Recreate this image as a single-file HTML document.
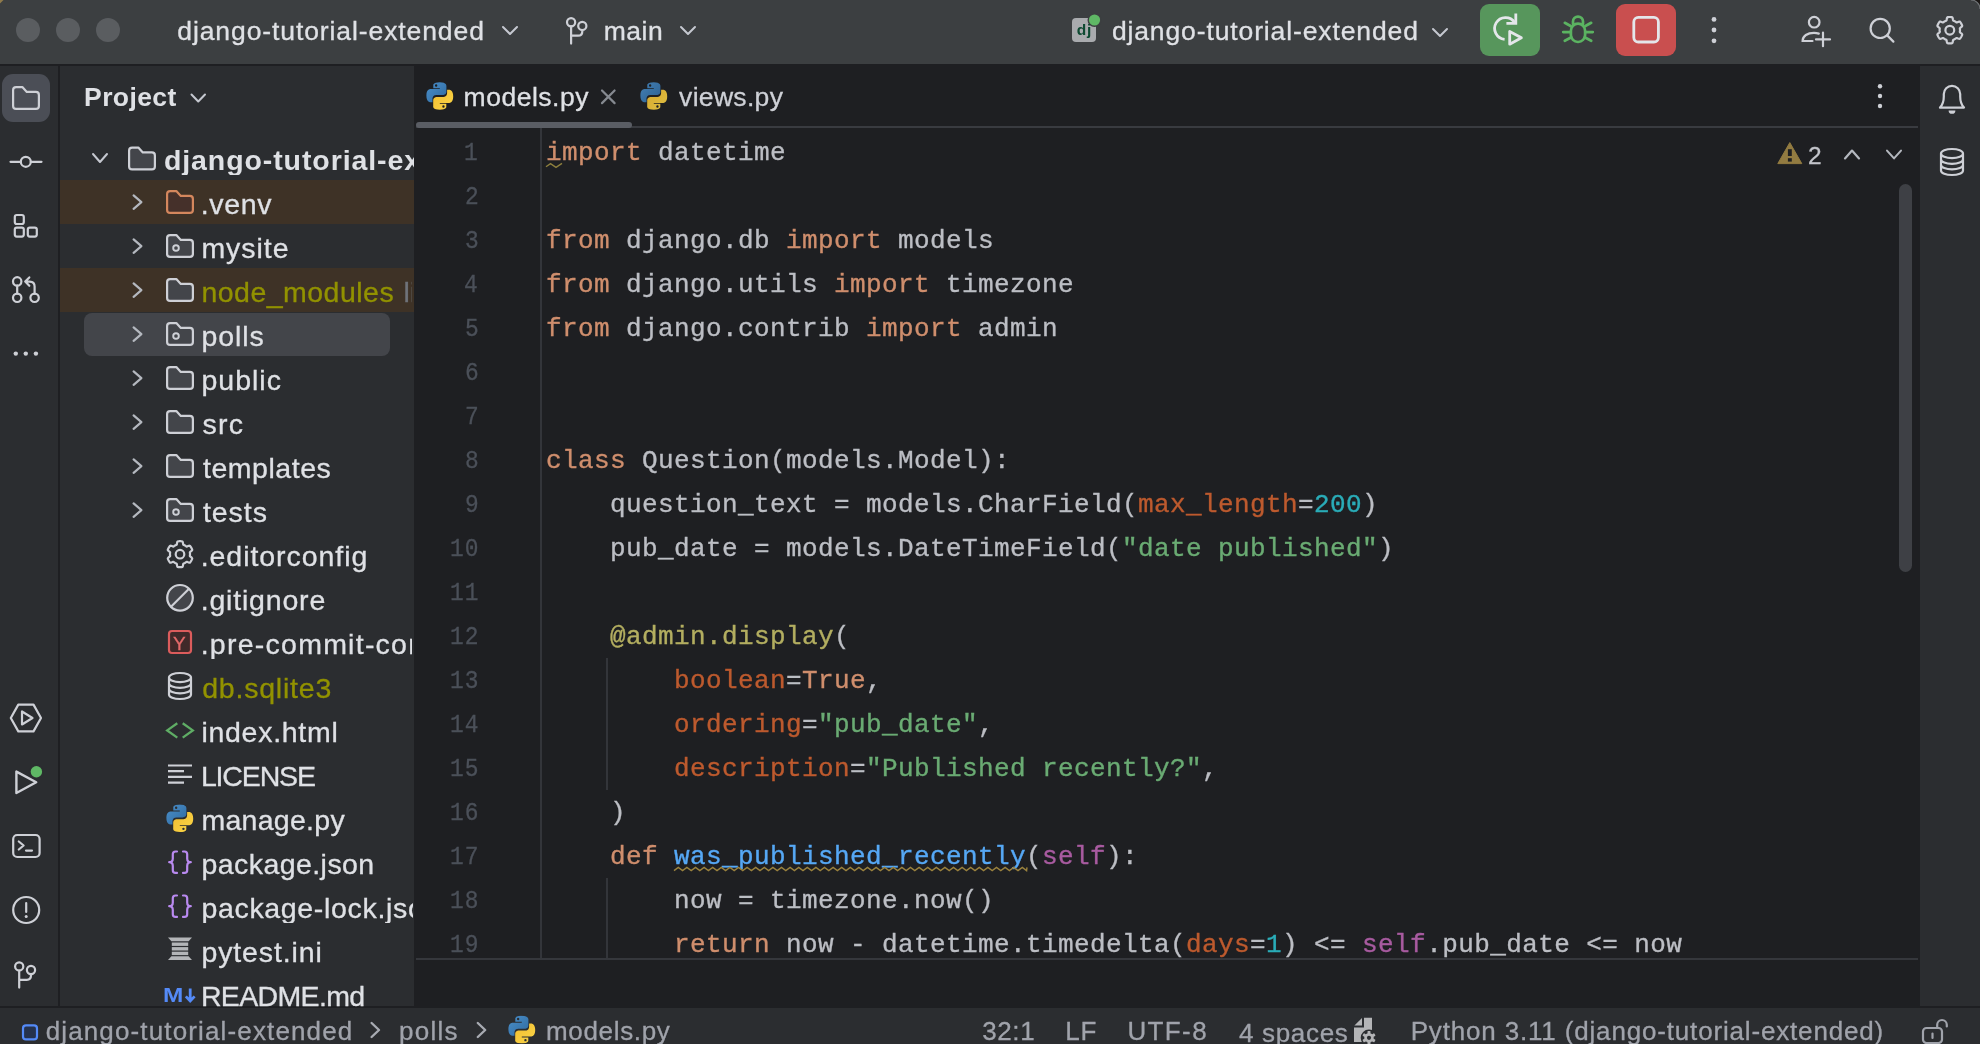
<!DOCTYPE html>
<html lang="en"><head><meta charset="utf-8"><title>models.py - django-tutorial-extended</title>
<style>html,body{margin:0;padding:0}body{width:1980px;height:1044px;background:#1e1f22;overflow:hidden;position:relative;font-family:"Liberation Sans",sans-serif}
.b{position:absolute}.t{position:absolute;line-height:1;white-space:pre;display:block;-webkit-text-stroke:.3px}.bd{-webkit-text-stroke:0}
.m{font-family:"Liberation Mono",monospace}.c{font-size:26.0px;letter-spacing:0.3977px;color:#bcbec4;-webkit-text-stroke:.35px}
.k{color:#cf8e6d}.s{color:#6aab73}.n{color:#2aacb8}.a{color:#bd5a2e}.d{color:#b3ae60}.f{color:#56a8f5}.p{color:#a85ba0}
svg.o{position:absolute;left:0;top:0}#L,#L2{position:absolute;left:0;top:0;width:1980px;height:1044px;will-change:transform}</style></head>
<body>
<div id="L">
<div class="b" style="left:0;top:0;width:1980px;height:64px;background:#3c3f41"></div>
<div class="b" style="left:0;top:66px;width:58px;height:940px;background:#2b2d30"></div>
<div class="b" style="left:60px;top:66px;width:354px;height:940px;background:#2b2d30"></div>
<div class="b" style="left:1920px;top:66px;width:60px;height:940px;background:#2b2d30"></div>
<div class="b" style="left:0;top:1008px;width:1980px;height:36px;background:#2b2d30"></div>
<div class="b" style="left:416px;top:126px;width:1502px;height:2px;background:#393b40"></div>
<div class="b" style="left:416px;top:122px;width:216px;height:6px;border-radius:3px;background:#5a5d64"></div>
<div class="b" style="left:540.4px;top:128px;width:1.6px;height:830px;background:#33353a"></div>
<div class="b" style="left:416px;top:958.2px;width:1502px;height:1.6px;background:#35373c"></div>
<div class="b" style="left:606.3px;top:658px;width:1.5px;height:132px;background:#33353a"></div>
<div class="b" style="left:606.3px;top:878px;width:1.5px;height:80px;background:#33353a"></div>
<div class="b" style="left:1898.5px;top:183.5px;width:13px;height:388px;border-radius:6.5px;background:#3e4045"></div>
<div class="b" style="left:60px;top:180px;width:354px;height:44px;background:#3e3226"></div>
<div class="b" style="left:60px;top:268px;width:354px;height:44px;background:#3e3226"></div>
<div class="b" style="left:84px;top:312.5px;width:306px;height:43.5px;border-radius:8px;background:#43454a"></div>
<div class="b" style="left:2px;top:74px;width:48px;height:48px;border-radius:11px;background:#4b4e56"></div>
<div class="b" style="left:1480px;top:4px;width:60px;height:52px;border-radius:9px;background:#57965c"></div>
<div class="b" style="left:1616px;top:4px;width:60px;height:52px;border-radius:9px;background:#c94f4f"></div>
<span class="t" style="left:177.28px;top:18px;font-size:26.5px;color:#dfe1e5;letter-spacing:0.904px;">django-tutorial-extended</span>
<span class="t" style="left:603.65px;top:18px;font-size:26.5px;color:#dfe1e5;letter-spacing:0.533px;">main</span>
<span class="t" style="left:1111.88px;top:18px;font-size:26.5px;color:#dfe1e5;letter-spacing:0.878px;">django-tutorial-extended</span>
<span class="t" style="left:84.05px;top:84px;font-size:26.5px;color:#dfe1e5;letter-spacing:0.408px;font-weight:700;-webkit-text-stroke:0;">Project</span>
<span class="t" style="left:163.88px;top:146px;font-size:28.5px;color:#dfe1e5;letter-spacing:0.916px;font-weight:700;-webkit-text-stroke:0;width:250.6px;overflow:hidden;">django-tutorial-extended</span>
<span class="t" style="left:200.68px;top:190px;font-size:28.5px;color:#dfe1e5;letter-spacing:0.706px;">.venv</span>
<span class="t" style="left:201.43px;top:234px;font-size:28.5px;color:#dfe1e5;letter-spacing:0.950px;">mysite</span>
<span class="t" style="left:201.43px;top:278px;font-size:28.5px;color:#929200;letter-spacing:0.480px;">node_modules</span>
<span class="t" style="left:403.62px;top:278px;font-size:28.5px;color:#6f737a;width:8.5px;overflow:hidden;">library root</span>
<span class="t" style="left:201.43px;top:322px;font-size:28.5px;color:#dfe1e5;letter-spacing:0.912px;">polls</span>
<span class="t" style="left:201.43px;top:366px;font-size:28.5px;color:#dfe1e5;letter-spacing:1.005px;">public</span>
<span class="t" style="left:202.43px;top:410px;font-size:28.5px;color:#dfe1e5;letter-spacing:1.262px;">src</span>
<span class="t" style="left:202.93px;top:454px;font-size:28.5px;color:#dfe1e5;letter-spacing:0.547px;">templates</span>
<span class="t" style="left:202.93px;top:498px;font-size:28.5px;color:#dfe1e5;letter-spacing:0.962px;">tests</span>
<span class="t" style="left:200.68px;top:542px;font-size:28.5px;color:#dfe1e5;letter-spacing:0.954px;">.editorconfig</span>
<span class="t" style="left:200.68px;top:586px;font-size:28.5px;color:#dfe1e5;letter-spacing:0.814px;">.gitignore</span>
<span class="t" style="left:200.68px;top:630px;font-size:28.5px;color:#dfe1e5;letter-spacing:1.252px;width:211.5px;overflow:hidden;">.pre-commit-config.yaml</span>
<span class="t" style="left:202.18px;top:674px;font-size:28.5px;color:#929200;letter-spacing:0.786px;">db.sqlite3</span>
<span class="t" style="left:201.43px;top:718px;font-size:28.5px;color:#dfe1e5;letter-spacing:0.719px;">index.html</span>
<span class="t" style="left:200.93px;top:762px;font-size:28.5px;color:#dfe1e5;letter-spacing:-1.163px;">LICENSE</span>
<span class="t" style="left:201.43px;top:806px;font-size:28.5px;color:#dfe1e5;letter-spacing:0.275px;">manage.py</span>
<span class="t" style="left:201.43px;top:850px;font-size:28.5px;color:#dfe1e5;letter-spacing:0.441px;">package.json</span>
<span class="t" style="left:201.43px;top:894px;font-size:28.5px;color:#dfe1e5;letter-spacing:0.671px;width:211.5px;overflow:hidden;">package-lock.json</span>
<span class="t" style="left:201.43px;top:938px;font-size:28.5px;color:#dfe1e5;letter-spacing:0.875px;">pytest.ini</span>
<span class="t" style="left:163.22px;top:985px;font-size:20px;color:#548af7;font-weight:700;-webkit-text-stroke:0;transform:scaleX(1.22);transform-origin:0 0;">M</span>
<span class="t" style="left:200.93px;top:982px;font-size:28.5px;color:#dfe1e5;letter-spacing:-0.644px;">README.md</span>
<span class="t" style="left:463.55px;top:84px;font-size:26.5px;color:#dfe1e5;letter-spacing:0.512px;">models.py</span>
<span class="t" style="left:679.08px;top:84px;font-size:26.5px;color:#ced0d6;letter-spacing:0.314px;">views.py</span>
<span class="t" style="left:1807.95px;top:144px;font-size:24.5px;color:#c3c5cb;">2</span>
<span class="t m" style="right:1500.86px;top:140px;font-size:26px;letter-spacing:1.2px;color:#4b5059;transform:scaleX(0.88);transform-origin:100% 50%">1</span>
<span class="t m c" style="left:546px;top:140px"><span class="k">import</span> datetime</span>
<span class="t m" style="right:1500.31px;top:184px;font-size:26px;letter-spacing:1.2px;color:#4b5059;transform:scaleX(0.88);transform-origin:100% 50%">2</span>
<span class="t m" style="right:1500.53px;top:228px;font-size:26px;letter-spacing:1.2px;color:#4b5059;transform:scaleX(0.88);transform-origin:100% 50%">3</span>
<span class="t m c" style="left:546px;top:228px"><span class="k">from</span> django.db <span class="k">import</span> models</span>
<span class="t m" style="right:1500.75px;top:272px;font-size:26px;letter-spacing:1.2px;color:#4b5059;transform:scaleX(0.88);transform-origin:100% 50%">4</span>
<span class="t m c" style="left:546px;top:272px"><span class="k">from</span> django.utils <span class="k">import</span> timezone</span>
<span class="t m" style="right:1500.53px;top:316px;font-size:26px;letter-spacing:1.2px;color:#4b5059;transform:scaleX(0.88);transform-origin:100% 50%">5</span>
<span class="t m c" style="left:546px;top:316px"><span class="k">from</span> django.contrib <span class="k">import</span> admin</span>
<span class="t m" style="right:1500.42px;top:360px;font-size:26px;letter-spacing:1.2px;color:#4b5059;transform:scaleX(0.88);transform-origin:100% 50%">6</span>
<span class="t m" style="right:1500.20px;top:404px;font-size:26px;letter-spacing:1.2px;color:#4b5059;transform:scaleX(0.88);transform-origin:100% 50%">7</span>
<span class="t m" style="right:1500.42px;top:448px;font-size:26px;letter-spacing:1.2px;color:#4b5059;transform:scaleX(0.88);transform-origin:100% 50%">8</span>
<span class="t m c" style="left:546px;top:448px"><span class="k">class</span> Question(models.Model):</span>
<span class="t m" style="right:1500.42px;top:492px;font-size:26px;letter-spacing:1.2px;color:#4b5059;transform:scaleX(0.88);transform-origin:100% 50%">9</span>
<span class="t m c" style="left:546px;top:492px">    question_text = models.CharField(<span class="a">max_length</span>=<span class="n">200</span>)</span>
<span class="t m" style="right:1500.53px;top:536px;font-size:26px;letter-spacing:1.2px;color:#4b5059;transform:scaleX(0.88);transform-origin:100% 50%">10</span>
<span class="t m c" style="left:546px;top:536px">    pub_date = models.DateTimeField(<span class="s">"date published"</span>)</span>
<span class="t m" style="right:1500.86px;top:580px;font-size:26px;letter-spacing:1.2px;color:#4b5059;transform:scaleX(0.88);transform-origin:100% 50%">11</span>
<span class="t m" style="right:1500.31px;top:624px;font-size:26px;letter-spacing:1.2px;color:#4b5059;transform:scaleX(0.88);transform-origin:100% 50%">12</span>
<span class="t m c" style="left:546px;top:624px">    <span class="d">@admin.display</span>(</span>
<span class="t m" style="right:1500.53px;top:668px;font-size:26px;letter-spacing:1.2px;color:#4b5059;transform:scaleX(0.88);transform-origin:100% 50%">13</span>
<span class="t m c" style="left:546px;top:668px">        <span class="a">boolean</span>=<span class="k">True</span>,</span>
<span class="t m" style="right:1500.75px;top:712px;font-size:26px;letter-spacing:1.2px;color:#4b5059;transform:scaleX(0.88);transform-origin:100% 50%">14</span>
<span class="t m c" style="left:546px;top:712px">        <span class="a">ordering</span>=<span class="s">"pub_date"</span>,</span>
<span class="t m" style="right:1500.53px;top:756px;font-size:26px;letter-spacing:1.2px;color:#4b5059;transform:scaleX(0.88);transform-origin:100% 50%">15</span>
<span class="t m c" style="left:546px;top:756px">        <span class="a">description</span>=<span class="s">"Published recently?"</span>,</span>
<span class="t m" style="right:1500.42px;top:800px;font-size:26px;letter-spacing:1.2px;color:#4b5059;transform:scaleX(0.88);transform-origin:100% 50%">16</span>
<span class="t m c" style="left:546px;top:800px">    )</span>
<span class="t m" style="right:1500.20px;top:844px;font-size:26px;letter-spacing:1.2px;color:#4b5059;transform:scaleX(0.88);transform-origin:100% 50%">17</span>
<span class="t m c" style="left:546px;top:844px">    <span class="k">def</span> <span class="f">was_published_recently</span>(<span class="p">self</span>):</span>
<span class="t m" style="right:1500.42px;top:888px;font-size:26px;letter-spacing:1.2px;color:#4b5059;transform:scaleX(0.88);transform-origin:100% 50%">18</span>
<span class="t m c" style="left:546px;top:888px">        now = timezone.now()</span>
<span class="t m" style="right:1500.42px;top:932px;font-size:26px;letter-spacing:1.2px;color:#4b5059;transform:scaleX(0.88);transform-origin:100% 50%">19</span>
<span class="t m c" style="left:546px;top:932px">        <span class="k">return</span> now - datetime.timedelta(<span class="a">days</span>=<span class="n">1</span>) &lt;= <span class="p">self</span>.pub_date &lt;= now</span>
<span class="t" style="left:45.67px;top:1018px;font-size:26px;color:#a0a3ab;letter-spacing:1.138px;">django-tutorial-extended</span>
<span class="t" style="left:398.98px;top:1018px;font-size:26px;color:#a0a3ab;letter-spacing:1.250px;">polls</span>
<span class="t" style="left:546.05px;top:1018px;font-size:26px;color:#a0a3ab;letter-spacing:0.656px;">models.py</span>
<span class="t" style="left:982.20px;top:1018px;font-size:26px;color:#a0a3ab;letter-spacing:0.608px;">32:1</span>
<span class="t" style="left:1065.28px;top:1018px;font-size:26px;color:#a0a3ab;letter-spacing:0.750px;">LF</span>
<span class="t" style="left:1127.40px;top:1018px;font-size:26px;color:#a0a3ab;letter-spacing:1.394px;">UTF-8</span>
<span class="t" style="left:1238.97px;top:1020px;font-size:26px;color:#a0a3ab;letter-spacing:0.682px;">4 spaces</span>
<span class="t" style="left:1410.67px;top:1018px;font-size:26px;color:#a0a3ab;letter-spacing:0.832px;">Python 3.11 (django-tutorial-extended)</span>
</div>
<svg class="o" width="1980" height="1044" viewBox="0 0 1980 1044">
<defs><linearGradient id="pb" x1="0" y1="0" x2="1" y2="1"><stop offset="0" stop-color="#4a8fca"/><stop offset="1" stop-color="#2f6aa0"/></linearGradient><linearGradient id="pyl" x1="0" y1="0" x2="1" y2="1"><stop offset="0" stop-color="#f2bd30"/><stop offset="1" stop-color="#fad648"/></linearGradient></defs>
<circle cx="28" cy="30" r="12" fill="#5a5d60"/>
<circle cx="68" cy="30" r="12" fill="#5a5d60"/>
<circle cx="108" cy="30" r="12" fill="#5a5d60"/>
<path d="M503 27L510.0 34L517 27" stroke="#c5c8d0" stroke-width="2.0" fill="none" stroke-linecap="round" stroke-linejoin="round"/>
<g stroke="#ced0d6" stroke-width="2.2" fill="none" stroke-linecap="round"><circle cx="571.1" cy="22.3" r="4.1"/><circle cx="582.3" cy="25.9" r="4.1"/><path d="M571.1 26.4V43.6M582.3 30V31.4Q582.3 35.600 578.1 35.600H571.1"/></g>
<path d="M681 27L688.0 34L695 27" stroke="#c5c8d0" stroke-width="2.0" fill="none" stroke-linecap="round" stroke-linejoin="round"/>
<rect x="1072" y="18" width="24" height="24" rx="4" fill="#a9abae"/>
<circle cx="1094.5" cy="20" r="7" fill="#3c3f41"/><circle cx="1094.5" cy="20" r="5.6" fill="#5fb865"/>
<path d="M1433 29L1440.0 36L1447 29" stroke="#c5c8d0" stroke-width="2.0" fill="none" stroke-linecap="round" stroke-linejoin="round"/>
<g stroke="#e4e6ea" stroke-width="2.8" fill="none" stroke-linejoin="round"><path d="M1504.6 39.3A10.9 10.9 0 1 1 1514.6 22.4"/><path d="M1515.8 13.4V23.4H1506.4" stroke-linejoin="miter"/><path d="M1509.7 31.4V44.2L1521.4 37.8Z" stroke-linecap="round"/></g>
<g stroke="#5bb361" stroke-width="2.7" fill="none" stroke-linecap="round" stroke-linejoin="round"><rect x="1570.9" y="23.6" width="14.2" height="18.4" rx="7" ry="7.1"/><path d="M1573 23.9V21.6A5 5 0 0 1 1583 21.6V23.9"/><path d="M1564.8 22.8L1570.6 26M1563.2 32.1H1570.4M1564.8 40.800L1571.4 37.300M1591.2 22.8L1585.4 26M1592.8 32.1H1585.6M1591.2 40.800L1584.6 37.300"/></g>
<rect x="1633.8" y="17.4" width="24.6" height="24.6" rx="4.5" stroke="#e4e6ea" stroke-width="2.8" fill="none"/>
<circle cx="1714" cy="19.4" r="2.4" fill="#ced0d6"/>
<circle cx="1714" cy="30" r="2.4" fill="#ced0d6"/>
<circle cx="1714" cy="40.8" r="2.4" fill="#ced0d6"/>
<g stroke="#ced0d6" stroke-width="2.2" fill="none" stroke-linecap="round"><circle cx="1814.2" cy="22.2" r="5.3"/><path d="M1812.5 41H1802.6C1802.6 36 1807.5 32.8 1814 32.8C1815.8 32.8 1817.4 33.1 1818.8 33.6"/><path d="M1816 39.4H1830M1823 32.6V46.2"/></g>
<g stroke="#ced0d6" stroke-width="2.2" fill="none" stroke-linecap="round"><circle cx="1880.2" cy="28.4" r="9.6"/><path d="M1887.2 35.4L1893.4 41.6"/></g>
<path d="M1960.00 30.20L1960.00 30.47L1959.99 30.73L1959.97 31.00L1959.94 31.27L1959.91 31.53L1959.87 31.80L1959.86 32.07L1960.07 32.38L1960.52 32.77L1961.10 33.23L1961.67 33.71L1962.06 34.18L1962.21 34.59L1962.12 34.93L1962.00 35.25L1961.86 35.57L1961.71 35.88L1961.56 36.19L1961.40 36.50L1961.23 36.80L1961.05 37.10L1960.87 37.39L1960.68 37.68L1960.48 37.96L1960.27 38.24L1960.06 38.51L1959.81 38.75L1959.38 38.83L1958.78 38.72L1958.07 38.47L1957.39 38.20L1956.83 38.01L1956.45 37.98L1956.22 38.13L1956.01 38.29L1955.80 38.45L1955.58 38.61L1955.36 38.75L1955.13 38.90L1954.90 39.03L1954.67 39.16L1954.43 39.29L1954.19 39.41L1953.95 39.52L1953.70 39.62L1953.46 39.72L1953.22 39.85L1953.05 40.19L1952.93 40.77L1952.83 41.50L1952.69 42.23L1952.48 42.81L1952.20 43.14L1951.86 43.24L1951.52 43.29L1951.18 43.33L1950.84 43.36L1950.49 43.38L1950.15 43.40L1949.80 43.40L1949.45 43.40L1949.11 43.38L1948.76 43.36L1948.42 43.33L1948.08 43.29L1947.74 43.24L1947.40 43.14L1947.12 42.81L1946.91 42.23L1946.77 41.50L1946.67 40.77L1946.55 40.19L1946.38 39.85L1946.14 39.72L1945.90 39.62L1945.65 39.52L1945.41 39.41L1945.17 39.29L1944.93 39.16L1944.70 39.03L1944.47 38.90L1944.24 38.75L1944.02 38.61L1943.80 38.45L1943.59 38.29L1943.38 38.13L1943.15 37.98L1942.77 38.01L1942.21 38.20L1941.53 38.47L1940.82 38.72L1940.22 38.83L1939.79 38.75L1939.54 38.51L1939.33 38.24L1939.12 37.96L1938.92 37.68L1938.73 37.39L1938.55 37.10L1938.37 36.80L1938.20 36.50L1938.04 36.19L1937.89 35.88L1937.74 35.57L1937.60 35.25L1937.48 34.93L1937.39 34.59L1937.54 34.18L1937.93 33.71L1938.50 33.23L1939.08 32.77L1939.53 32.38L1939.74 32.07L1939.73 31.80L1939.69 31.53L1939.66 31.27L1939.63 31.00L1939.61 30.73L1939.60 30.47L1939.60 30.20L1939.60 29.93L1939.61 29.67L1939.63 29.40L1939.66 29.13L1939.69 28.87L1939.73 28.60L1939.74 28.33L1939.53 28.02L1939.08 27.63L1938.50 27.17L1937.93 26.69L1937.54 26.22L1937.39 25.81L1937.48 25.47L1937.60 25.15L1937.74 24.83L1937.89 24.52L1938.04 24.21L1938.20 23.90L1938.37 23.60L1938.55 23.30L1938.73 23.01L1938.92 22.72L1939.12 22.44L1939.33 22.16L1939.54 21.89L1939.79 21.65L1940.22 21.57L1940.82 21.68L1941.53 21.93L1942.21 22.20L1942.77 22.39L1943.15 22.42L1943.38 22.27L1943.59 22.11L1943.80 21.95L1944.02 21.79L1944.24 21.65L1944.47 21.50L1944.70 21.37L1944.93 21.24L1945.17 21.11L1945.41 20.99L1945.65 20.88L1945.90 20.78L1946.14 20.68L1946.38 20.55L1946.55 20.21L1946.67 19.63L1946.77 18.90L1946.91 18.17L1947.12 17.59L1947.40 17.26L1947.74 17.16L1948.08 17.11L1948.42 17.07L1948.76 17.04L1949.11 17.02L1949.45 17.00L1949.80 17.00L1950.15 17.00L1950.49 17.02L1950.84 17.04L1951.18 17.07L1951.52 17.11L1951.86 17.16L1952.20 17.26L1952.48 17.59L1952.69 18.17L1952.83 18.90L1952.93 19.63L1953.05 20.21L1953.22 20.55L1953.46 20.68L1953.70 20.78L1953.95 20.88L1954.19 20.99L1954.43 21.11L1954.67 21.24L1954.90 21.37L1955.13 21.50L1955.36 21.65L1955.58 21.79L1955.80 21.95L1956.01 22.11L1956.22 22.27L1956.45 22.42L1956.83 22.39L1957.39 22.20L1958.07 21.93L1958.78 21.68L1959.38 21.57L1959.81 21.65L1960.06 21.89L1960.27 22.16L1960.48 22.44L1960.68 22.72L1960.87 23.01L1961.05 23.30L1961.23 23.60L1961.40 23.90L1961.56 24.21L1961.71 24.52L1961.86 24.83L1962.00 25.15L1962.12 25.47L1962.21 25.81L1962.06 26.22L1961.67 26.69L1961.10 27.17L1960.52 27.63L1960.07 28.02L1959.86 28.33L1959.87 28.60L1959.91 28.87L1959.94 29.13L1959.97 29.40L1959.99 29.67L1960.00 29.93Z" stroke="#ced0d6" stroke-width="2.2" fill="none" stroke-linejoin="round"/><circle cx="1949.8" cy="30.2" r="4.4" stroke="#ced0d6" stroke-width="2.2" fill="none"/>
<path d="M13.1 90.1Q13.1 87.1 16.1 87.1H22.34L26.82 91.89999999999999H35.9Q38.9 91.89999999999999 38.9 94.89999999999999V105.9Q38.9 108.9 35.9 108.9H16.1Q13.1 108.9 13.1 105.9Z" stroke="#ced0d6" stroke-width="2.2" fill="none" stroke-linejoin="round"/>
<g stroke="#ced0d6" stroke-width="2.2" fill="none" stroke-linecap="round"><circle cx="25.8" cy="161.8" r="5"/><path d="M10.5 161.8H20.8M30.8 161.8H41.5"/></g>
<g stroke="#ced0d6" stroke-width="2.2" fill="none"><rect x="14.8" y="215" width="9" height="9" rx="2"/><rect x="14.8" y="227.6" width="9" height="9" rx="2"/><rect x="27.8" y="227.6" width="9" height="9" rx="2"/></g>
<g stroke="#ced0d6" stroke-width="2.2" fill="none" stroke-linecap="round" stroke-linejoin="round"><circle cx="17.2" cy="281.4" r="4.2"/><circle cx="17.2" cy="297.8" r="4.2"/><circle cx="34.6" cy="297.8" r="4.2"/><path d="M17.2 285.6V293.6M34.6 293.6V286.5Q34.6 281.6 29.7 281.6H25.5M29.3 277.4L25.2 281.6L29.3 285.8"/></g>
<circle cx="15.8" cy="353.6" r="2.2" fill="#ced0d6"/>
<circle cx="25.8" cy="353.6" r="2.2" fill="#ced0d6"/>
<circle cx="35.9" cy="353.6" r="2.2" fill="#ced0d6"/>
<g stroke="#ced0d6" stroke-width="2.2" fill="none" stroke-linejoin="round"><path d="M10.8 718L18.3 704.6H33.5L41 718L33.5 731.4H18.3Z"/><path d="M22 711.5V724.5L32.5 718Z"/></g>
<path d="M16.4 771.6V793L36.2 782.3Z" stroke="#ced0d6" stroke-width="2.4" fill="none" stroke-linejoin="round"/>
<circle cx="36.4" cy="771.8" r="7.6" fill="#2b2d30"/><circle cx="36.4" cy="771.8" r="5.7" fill="#5fb865"/>
<g stroke="#ced0d6" stroke-width="2.2" fill="none" stroke-linecap="round" stroke-linejoin="round"><rect x="13.2" y="835" width="26.4" height="22" rx="4"/><path d="M18.8 841.5L23.6 845.5L18.8 849.5M26 850.6H32"/></g>
<g stroke="#ced0d6" stroke-width="2.2" fill="none" stroke-linecap="round"><circle cx="26.2" cy="910" r="13"/><path d="M26.2 903V912"/></g><circle cx="26.2" cy="916.6" r="1.5" fill="#ced0d6"/>
<g stroke="#ced0d6" stroke-width="2.2" fill="none" stroke-linecap="round"><circle cx="19.2" cy="966.4" r="4.1"/><circle cx="31" cy="970" r="4.1"/><path d="M19.2 970.5V987.6M31 974.1V975.6Q31 979.8 26.8 979.8H19.2"/></g>
<path d="M191.5 94.5L198.25 101.5L205 94.5" stroke="#c5c8d0" stroke-width="2.0" fill="none" stroke-linecap="round" stroke-linejoin="round"/>
<path d="M93 154L100.0 162L107 154" stroke="#c5c8d0" stroke-width="2.0" fill="none" stroke-linecap="round" stroke-linejoin="round"/>
<path d="M129.1 150.6Q129.1 147.6 132.1 147.6H138.34L142.82 152.4H151.9Q154.9 152.4 154.9 155.4V166.4Q154.9 169.4 151.9 169.4H132.1Q129.1 169.4 129.1 166.4Z" stroke="#ced0d6" stroke-width="2.2" fill="#43454a" stroke-linejoin="round"/>
<path d="M133.6 195.4L141.4 202.10000000000002L133.6 208.8" stroke="#b4b8bf" stroke-width="2.2" fill="none" stroke-linecap="round" stroke-linejoin="round"/>
<path d="M167.1 194.1Q167.1 191.1 170.1 191.1H176.34L180.82 195.9H189.9Q192.9 195.9 192.9 198.9V209.9Q192.9 212.9 189.9 212.9H170.1Q167.1 212.9 167.1 209.9Z" stroke="#d4875d" stroke-width="2.2" fill="#45302a" stroke-linejoin="round"/>
<path d="M133.6 239.4L141.4 246.10000000000002L133.6 252.8" stroke="#b4b8bf" stroke-width="2.2" fill="none" stroke-linecap="round" stroke-linejoin="round"/>
<path d="M167.1 238.1Q167.1 235.1 170.1 235.1H176.34L180.82 239.9H189.9Q192.9 239.9 192.9 242.9V253.89999999999998Q192.9 256.9 189.9 256.9H170.1Q167.1 256.9 167.1 253.89999999999998Z" stroke="#ced0d6" stroke-width="2.2" fill="#43454a" stroke-linejoin="round"/>
<circle cx="176" cy="248" r="2.8" stroke="#ced0d6" stroke-width="1.9" fill="none"/>
<path d="M133.6 283.4L141.4 290.1L133.6 296.8" stroke="#b4b8bf" stroke-width="2.2" fill="none" stroke-linecap="round" stroke-linejoin="round"/>
<path d="M167.1 282.1Q167.1 279.1 170.1 279.1H176.34L180.82 283.90000000000003H189.9Q192.9 283.90000000000003 192.9 286.90000000000003V297.9Q192.9 300.9 189.9 300.9H170.1Q167.1 300.9 167.1 297.9Z" stroke="#ced0d6" stroke-width="2.2" fill="#43454a" stroke-linejoin="round"/>
<path d="M133.6 327.4L141.4 334.1L133.6 340.8" stroke="#b4b8bf" stroke-width="2.2" fill="none" stroke-linecap="round" stroke-linejoin="round"/>
<path d="M167.1 326.1Q167.1 323.1 170.1 323.1H176.34L180.82 327.90000000000003H189.9Q192.9 327.90000000000003 192.9 330.90000000000003V341.9Q192.9 344.9 189.9 344.9H170.1Q167.1 344.9 167.1 341.9Z" stroke="#ced0d6" stroke-width="2.2" fill="#43454a" stroke-linejoin="round"/>
<circle cx="176" cy="336" r="2.8" stroke="#ced0d6" stroke-width="1.9" fill="none"/>
<path d="M133.6 371.4L141.4 378.1L133.6 384.8" stroke="#b4b8bf" stroke-width="2.2" fill="none" stroke-linecap="round" stroke-linejoin="round"/>
<path d="M167.1 370.1Q167.1 367.1 170.1 367.1H176.34L180.82 371.90000000000003H189.9Q192.9 371.90000000000003 192.9 374.90000000000003V385.9Q192.9 388.9 189.9 388.9H170.1Q167.1 388.9 167.1 385.9Z" stroke="#ced0d6" stroke-width="2.2" fill="#43454a" stroke-linejoin="round"/>
<path d="M133.6 415.4L141.4 422.1L133.6 428.8" stroke="#b4b8bf" stroke-width="2.2" fill="none" stroke-linecap="round" stroke-linejoin="round"/>
<path d="M167.1 414.1Q167.1 411.1 170.1 411.1H176.34L180.82 415.90000000000003H189.9Q192.9 415.90000000000003 192.9 418.90000000000003V429.9Q192.9 432.9 189.9 432.9H170.1Q167.1 432.9 167.1 429.9Z" stroke="#ced0d6" stroke-width="2.2" fill="#43454a" stroke-linejoin="round"/>
<path d="M133.6 459.4L141.4 466.1L133.6 472.8" stroke="#b4b8bf" stroke-width="2.2" fill="none" stroke-linecap="round" stroke-linejoin="round"/>
<path d="M167.1 458.1Q167.1 455.1 170.1 455.1H176.34L180.82 459.90000000000003H189.9Q192.9 459.90000000000003 192.9 462.90000000000003V473.9Q192.9 476.9 189.9 476.9H170.1Q167.1 476.9 167.1 473.9Z" stroke="#ced0d6" stroke-width="2.2" fill="#43454a" stroke-linejoin="round"/>
<path d="M133.6 503.4L141.4 510.09999999999997L133.6 516.8" stroke="#b4b8bf" stroke-width="2.2" fill="none" stroke-linecap="round" stroke-linejoin="round"/>
<path d="M167.1 502.1Q167.1 499.1 170.1 499.1H176.34L180.82 503.90000000000003H189.9Q192.9 503.90000000000003 192.9 506.90000000000003V517.9Q192.9 520.9 189.9 520.9H170.1Q167.1 520.9 167.1 517.9Z" stroke="#ced0d6" stroke-width="2.2" fill="#43454a" stroke-linejoin="round"/>
<circle cx="176" cy="512" r="2.8" stroke="#ced0d6" stroke-width="1.9" fill="none"/>
<path d="M190.00 554.20L190.00 554.46L189.99 554.72L189.97 554.98L189.95 555.25L189.91 555.51L189.88 555.76L189.87 556.03L190.08 556.34L190.53 556.73L191.11 557.18L191.67 557.66L192.07 558.12L192.22 558.53L192.14 558.86L192.01 559.17L191.88 559.49L191.73 559.80L191.58 560.10L191.42 560.40L191.26 560.70L191.08 560.99L190.90 561.28L190.71 561.56L190.52 561.84L190.31 562.11L190.10 562.38L189.86 562.62L189.43 562.69L188.83 562.58L188.13 562.33L187.45 562.05L186.90 561.86L186.52 561.83L186.29 561.97L186.09 562.13L185.88 562.29L185.66 562.44L185.45 562.59L185.22 562.73L185.00 562.86L184.77 562.99L184.54 563.11L184.31 563.23L184.07 563.34L183.83 563.44L183.58 563.54L183.35 563.66L183.18 564.00L183.07 564.58L182.98 565.31L182.84 566.04L182.64 566.62L182.36 566.95L182.03 567.04L181.70 567.09L181.36 567.13L181.02 567.16L180.68 567.18L180.34 567.20L180.00 567.20L179.66 567.20L179.32 567.18L178.98 567.16L178.64 567.13L178.30 567.09L177.97 567.04L177.64 566.95L177.36 566.62L177.16 566.04L177.02 565.31L176.93 564.58L176.82 564.00L176.65 563.66L176.42 563.54L176.17 563.44L175.93 563.34L175.69 563.23L175.46 563.11L175.23 562.99L175.00 562.86L174.78 562.73L174.55 562.59L174.34 562.44L174.12 562.29L173.91 562.13L173.71 561.97L173.48 561.83L173.10 561.86L172.55 562.05L171.87 562.33L171.17 562.58L170.57 562.69L170.14 562.62L169.90 562.38L169.69 562.11L169.48 561.84L169.29 561.56L169.10 561.28L168.92 560.99L168.74 560.70L168.58 560.40L168.42 560.10L168.27 559.80L168.12 559.49L167.99 559.17L167.86 558.86L167.78 558.53L167.93 558.12L168.33 557.66L168.89 557.18L169.47 556.73L169.92 556.34L170.13 556.03L170.12 555.76L170.09 555.51L170.05 555.25L170.03 554.98L170.01 554.72L170.00 554.46L170.00 554.20L170.00 553.94L170.01 553.68L170.03 553.42L170.05 553.15L170.09 552.89L170.12 552.64L170.13 552.37L169.92 552.06L169.47 551.67L168.89 551.22L168.33 550.74L167.93 550.28L167.78 549.87L167.86 549.54L167.99 549.23L168.12 548.91L168.27 548.60L168.42 548.30L168.58 548.00L168.74 547.70L168.92 547.41L169.10 547.12L169.29 546.84L169.48 546.56L169.69 546.29L169.90 546.02L170.14 545.78L170.57 545.71L171.17 545.82L171.87 546.07L172.55 546.35L173.10 546.54L173.48 546.57L173.71 546.43L173.91 546.27L174.12 546.11L174.34 545.96L174.55 545.81L174.78 545.67L175.00 545.54L175.23 545.41L175.46 545.29L175.69 545.17L175.93 545.06L176.17 544.96L176.42 544.86L176.65 544.74L176.82 544.40L176.93 543.82L177.02 543.09L177.16 542.36L177.36 541.78L177.64 541.45L177.97 541.36L178.30 541.31L178.64 541.27L178.98 541.24L179.32 541.22L179.66 541.20L180.00 541.20L180.34 541.20L180.68 541.22L181.02 541.24L181.36 541.27L181.70 541.31L182.03 541.36L182.36 541.45L182.64 541.78L182.84 542.36L182.98 543.09L183.07 543.82L183.18 544.40L183.35 544.74L183.58 544.86L183.83 544.96L184.07 545.06L184.31 545.17L184.54 545.29L184.77 545.41L185.00 545.54L185.22 545.67L185.45 545.81L185.66 545.96L185.88 546.11L186.09 546.27L186.29 546.43L186.52 546.57L186.90 546.54L187.45 546.35L188.13 546.07L188.83 545.82L189.43 545.71L189.86 545.78L190.10 546.02L190.31 546.29L190.52 546.56L190.71 546.84L190.90 547.12L191.08 547.41L191.26 547.70L191.42 548.00L191.58 548.30L191.73 548.60L191.88 548.91L192.01 549.23L192.14 549.54L192.22 549.87L192.07 550.28L191.67 550.74L191.11 551.22L190.53 551.67L190.08 552.06L189.87 552.37L189.88 552.64L189.91 552.89L189.95 553.15L189.97 553.42L189.99 553.68L190.00 553.94Z" stroke="#ced0d6" stroke-width="2.2" fill="none" stroke-linejoin="round"/><circle cx="180" cy="554.2" r="4.3" stroke="#ced0d6" stroke-width="2.2" fill="none"/>
<circle cx="180" cy="597.8" r="12.8" stroke="#ced0d6" stroke-width="2.2" fill="#43454a"/><path d="M171 606.8L189 588.8" stroke="#ced0d6" stroke-width="2.2"/>
<rect x="169" y="631" width="22" height="22" rx="3" stroke="#db5c5c" stroke-width="2.2" fill="#402929"/>
<path d="M169 677.6A11 4.6 0 0 1 191 677.6A11 4.6 0 0 1 169 677.6M169 677.6V694.4M191 677.6V694.4M169 683.2A11 4.6 0 0 0 191 683.2M169 688.8A11 4.6 0 0 0 191 688.8M169 694.4A11 4.6 0 0 0 191 694.4" stroke="#ced0d6" stroke-width="2.2" fill="none"/>
<path d="M177.3 723.2L167.2 730.4L177.3 737.6M182.7 723.2L192.8 730.4L182.7 737.6" stroke="#5fad65" stroke-width="2.3" fill="none" stroke-linejoin="miter"/>
<path d="M168 765.5H192M168 771.2H184M168 776.9H192M168 782.6H184" stroke="#ced0d6" stroke-width="2.2" fill="none"/>
<svg x="166" y="804.3" width="28" height="28" opacity="1" viewBox="2 1.8 28.4 28.4"><path fill="url(#pb)" d="M15.9 2C9 2 9.4 5 9.4 5v3.1h6.6v.9H6.8S2.4 8.5 2.4 15.5s3.9 6.8 3.9 6.8h2.3V19s-.1-3.9 3.8-3.9H19s3.7.1 3.7-3.6V5.8S23.2 2 15.9 2zM12.3 4.1a1.2 1.2 0 1 1 0 2.4 1.2 1.2 0 0 1 0-2.4z"/><path fill="url(#pyl)" d="M16.1 30c6.9 0 6.5-3 6.5-3v-3.1H16v-.9h9.2s4.4.5 4.4-6.5-3.9-6.8-3.9-6.8h-2.3V13s.1 3.9-3.8 3.9H13s-3.700-.1-3.700 3.600v6.200S8.800 30 16.100 30zm3.600-2.100a1.200 1.200 0 1 1 0-2.400 1.200 1.200 0 0 1 0 2.400z"/></svg>
<g stroke="#b98af0" stroke-width="2.2" fill="none" stroke-linecap="round" stroke-linejoin="round"><path d="M177 851.5H175.5Q172.8 851.5 172.8 854.2V858.5Q172.8 862.2 169.2 862.2Q172.8 862.2 172.8 865.9V870.2Q172.8 872.9 175.5 872.9H177"/><path d="M183 851.5H184.5Q187.2 851.5 187.2 854.2V858.5Q187.2 862.2 190.8 862.2Q187.2 862.2 187.2 865.9V870.2Q187.2 872.9 184.5 872.9H183"/></g>
<g stroke="#b98af0" stroke-width="2.2" fill="none" stroke-linecap="round" stroke-linejoin="round"><path d="M177 895.5H175.5Q172.8 895.5 172.8 898.2V902.5Q172.8 906.2 169.2 906.2Q172.8 906.2 172.8 909.9V914.2Q172.8 916.9 175.5 916.9H177"/><path d="M183 895.5H184.5Q187.2 895.5 187.2 898.2V902.5Q187.2 906.2 190.8 906.2Q187.2 906.2 187.2 909.9V914.2Q187.2 916.9 184.5 916.9H183"/></g>
<g fill="#b3b5b8"><path d="M168 937.5H192L188.6 941.2H171.4Z"/><rect x="171.8" y="942.5" width="16.4" height="3.4"/><rect x="171.8" y="947.1" width="16.4" height="3.4"/><rect x="171.8" y="951.7" width="16.4" height="3.4"/><path d="M171.4 956.3H188.6L192 960.0H168Z"/></g>
<path d="M190.2 988.6V1000.6M185.8 996.4L190.2 1001L194.600 996.4" stroke="#548af7" stroke-width="2.8" fill="none" stroke-linecap="butt" stroke-linejoin="miter"/>
<svg x="426" y="82" width="28" height="28" opacity="1" viewBox="2 1.8 28.4 28.4"><path fill="url(#pb)" d="M15.9 2C9 2 9.4 5 9.4 5v3.1h6.6v.9H6.8S2.4 8.5 2.4 15.5s3.9 6.8 3.9 6.8h2.3V19s-.1-3.9 3.8-3.9H19s3.7.1 3.7-3.6V5.8S23.2 2 15.9 2zM12.3 4.1a1.2 1.2 0 1 1 0 2.4 1.2 1.2 0 0 1 0-2.4z"/><path fill="url(#pyl)" d="M16.1 30c6.9 0 6.5-3 6.5-3v-3.1H16v-.9h9.2s4.4.5 4.4-6.5-3.9-6.8-3.9-6.8h-2.3V13s.1 3.9-3.8 3.9H13s-3.700-.1-3.700 3.600v6.200S8.800 30 16.100 30zm3.600-2.100a1.200 1.200 0 1 1 0-2.400 1.200 1.200 0 0 1 0 2.400z"/></svg>
<svg x="640" y="82" width="28" height="28" opacity="0.88" viewBox="2 1.8 28.4 28.4"><path fill="url(#pb)" d="M15.9 2C9 2 9.4 5 9.4 5v3.1h6.6v.9H6.8S2.4 8.5 2.4 15.5s3.9 6.8 3.9 6.8h2.3V19s-.1-3.9 3.8-3.9H19s3.7.1 3.7-3.6V5.8S23.2 2 15.9 2zM12.3 4.1a1.2 1.2 0 1 1 0 2.4 1.2 1.2 0 0 1 0-2.4z"/><path fill="url(#pyl)" d="M16.1 30c6.9 0 6.5-3 6.5-3v-3.1H16v-.9h9.2s4.4.5 4.4-6.5-3.9-6.8-3.9-6.8h-2.3V13s.1 3.9-3.8 3.9H13s-3.700-.1-3.700 3.600v6.200S8.800 30 16.100 30zm3.600-2.100a1.200 1.200 0 1 1 0-2.400 1.200 1.200 0 0 1 0 2.400z"/></svg>
<path d="M602 90.5L614.6 103.1M614.6 90.5L602 103.1" stroke="#868a91" stroke-width="2.2" stroke-linecap="round"/>
<circle cx="1880" cy="86.2" r="2.2" fill="#ced0d6"/>
<circle cx="1880" cy="96" r="2.2" fill="#ced0d6"/>
<circle cx="1880" cy="106" r="2.2" fill="#ced0d6"/>
<path d="M1940 107.6H1964C1961 104.5 1960.2 101 1960.2 96.5V94A8.2 8.2 0 0 0 1943.8 94V96.5C1943.8 101 1943 104.5 1940 107.600Z" stroke="#ced0d6" stroke-width="2.2" fill="none" stroke-linejoin="round"/><path d="M1948.6 110.4H1955.4A3.4 3.4 0 0 1 1948.6 110.4Z" fill="#ced0d6"/>
<path d="M1941 153.6A11 4.6 0 0 1 1963 153.6A11 4.6 0 0 1 1941 153.6M1941 153.6V170.4M1963 153.6V170.4M1941 159.2A11 4.6 0 0 0 1963 159.2M1941 164.8A11 4.6 0 0 0 1963 164.8M1941 170.4A11 4.6 0 0 0 1963 170.4" stroke="#ced0d6" stroke-width="2.2" fill="none"/>
<path d="M1789.8 142.6L1801.8 163.6H1777.8Z" fill="#927b41" stroke="#927b41" stroke-width="1" stroke-linejoin="round"/><rect x="1787.9" y="149.2" width="3.9" height="6.8" fill="#1e1f22"/><rect x="1787.9" y="158.2" width="3.9" height="3.4" fill="#1e1f22"/>
<path d="M1845 158.4L1852.0 150.6L1859 158.4" stroke="#b4b8bf" stroke-width="2.2" fill="none" stroke-linecap="round" stroke-linejoin="round"/>
<path d="M1887 150.6L1894.0 158.4L1901 150.6" stroke="#b4b8bf" stroke-width="2.0" fill="none" stroke-linecap="round" stroke-linejoin="round"/>
<path d="M546 166.8L550.5 163.6L556 167.4L562 163.4" stroke="#8d7f3e" stroke-width="1.4" fill="none"/>
<path d="M674 870.6L678.3 867.4L682.6 870.6L686.9 867.4L691.2 870.6L695.5 867.4L699.8 870.6L704.1 867.4L708.4 870.6L712.7 867.4L717.0 870.6L721.3 867.4L725.6 870.6L729.9 867.4L734.2 870.6L738.5 867.4L742.8 870.6L747.1 867.4L751.4 870.6L755.7 867.4L760.0 870.6L764.3 867.4L768.6 870.6L772.9 867.4L777.2 870.6L781.5 867.4L785.8 870.6L790.1 867.4L794.4 870.6L798.7 867.4L803.0 870.6L807.3 867.4L811.6 870.6L815.9 867.4L820.2 870.6L824.5 867.4L828.8 870.6L833.1 867.4L837.4 870.6L841.7 867.4L846.0 870.6L850.3 867.4L854.6 870.6L858.9 867.4L863.2 870.6L867.5 867.4L871.8 870.6L876.1 867.4L880.4 870.6L884.7 867.4L889.0 870.6L893.3 867.4L897.6 870.6L901.9 867.4L906.2 870.6L910.5 867.4L914.8 870.6L919.1 867.4L923.4 870.6L927.7 867.4L932.0 870.6L936.3 867.4L940.6 870.6L944.9 867.4L949.2 870.6L953.5 867.4L957.8 870.6L962.1 867.4L966.4 870.6L970.7 867.4L975.0 870.6L979.3 867.4L983.6 870.6L987.9 867.4L992.2 870.6L996.5 867.4L1000.8 870.6L1005.1 867.4L1009.4 870.6L1013.7 867.4L1018.0 870.6L1022.3 867.4L1026.6 870.6L1027.0 867.4" stroke="#9a823e" stroke-width="1.4" fill="none"/>
<rect x="23" y="1025.4" width="14" height="14" rx="3" stroke="#548af7" stroke-width="2.2" fill="#25324d"/>
<path d="M371.6 1023L379 1030.0L371.6 1037" stroke="#a8abb2" stroke-width="2.4" fill="none" stroke-linecap="round" stroke-linejoin="round"/>
<path d="M477.8 1023L485.2 1030.0L477.8 1037" stroke="#a8abb2" stroke-width="2.4" fill="none" stroke-linecap="round" stroke-linejoin="round"/>
<svg x="508" y="1015.6" width="28" height="28" opacity="1" viewBox="2 1.8 28.4 28.4"><path fill="url(#pb)" d="M15.9 2C9 2 9.4 5 9.4 5v3.1h6.6v.9H6.8S2.4 8.5 2.4 15.5s3.9 6.8 3.9 6.8h2.3V19s-.1-3.9 3.8-3.9H19s3.7.1 3.7-3.6V5.8S23.2 2 15.9 2zM12.3 4.1a1.2 1.2 0 1 1 0 2.4 1.2 1.2 0 0 1 0-2.4z"/><path fill="url(#pyl)" d="M16.1 30c6.9 0 6.5-3 6.5-3v-3.1H16v-.9h9.2s4.4.5 4.4-6.5-3.9-6.8-3.9-6.8h-2.3V13s.1 3.9-3.8 3.9H13s-3.700-.1-3.700 3.600v6.200S8.800 30 16.100 30zm3.600-2.100a1.200 1.200 0 1 1 0-2.400 1.200 1.200 0 0 1 0 2.400z"/></svg>
<path d="M1364 1017.8H1372V1042H1354V1027.6H1364Z" fill="#b4b5b7"/><path d="M1354.4 1025.6L1362 1018V1025.600Z" fill="#b4b5b7"/>
<circle cx="1369" cy="1037.8" r="8.3" fill="#2b2d30"/>
<path d="M1373.70 1037.80L1373.70 1037.96L1373.69 1038.13L1373.67 1038.29L1373.65 1038.45L1373.63 1038.62L1373.72 1038.80L1374.22 1039.10L1374.88 1039.49L1375.34 1039.86L1375.39 1040.13L1375.30 1040.35L1375.21 1040.57L1375.11 1040.78L1375.00 1040.99L1374.89 1041.20L1374.77 1041.40L1374.64 1041.60L1374.50 1041.80L1374.36 1041.99L1374.21 1042.17L1373.96 1042.26L1373.40 1042.05L1372.74 1041.67L1372.23 1041.39L1372.02 1041.40L1371.89 1041.50L1371.76 1041.60L1371.63 1041.70L1371.49 1041.79L1371.35 1041.87L1371.21 1041.95L1371.06 1042.02L1370.91 1042.09L1370.76 1042.16L1370.61 1042.22L1370.49 1042.39L1370.48 1042.97L1370.48 1043.74L1370.39 1044.32L1370.18 1044.50L1369.95 1044.53L1369.71 1044.56L1369.47 1044.58L1369.24 1044.60L1369.00 1044.60L1368.76 1044.60L1368.53 1044.58L1368.29 1044.56L1368.05 1044.53L1367.82 1044.50L1367.61 1044.32L1367.52 1043.74L1367.52 1042.97L1367.51 1042.39L1367.39 1042.22L1367.24 1042.16L1367.09 1042.09L1366.94 1042.02L1366.79 1041.95L1366.65 1041.87L1366.51 1041.79L1366.37 1041.70L1366.24 1041.60L1366.11 1041.50L1365.98 1041.40L1365.77 1041.39L1365.26 1041.67L1364.60 1042.05L1364.04 1042.26L1363.79 1042.17L1363.64 1041.99L1363.50 1041.80L1363.36 1041.60L1363.23 1041.40L1363.11 1041.20L1363.00 1040.99L1362.89 1040.78L1362.79 1040.57L1362.70 1040.35L1362.61 1040.13L1362.66 1039.86L1363.12 1039.49L1363.78 1039.10L1364.28 1038.80L1364.37 1038.62L1364.35 1038.45L1364.33 1038.29L1364.31 1038.13L1364.30 1037.96L1364.30 1037.80L1364.30 1037.64L1364.31 1037.47L1364.33 1037.31L1364.35 1037.15L1364.37 1036.98L1364.28 1036.80L1363.78 1036.50L1363.12 1036.11L1362.66 1035.74L1362.61 1035.47L1362.70 1035.25L1362.79 1035.03L1362.89 1034.82L1363.00 1034.61L1363.11 1034.40L1363.23 1034.20L1363.36 1034.00L1363.50 1033.80L1363.64 1033.61L1363.79 1033.43L1364.04 1033.34L1364.60 1033.55L1365.26 1033.93L1365.77 1034.21L1365.98 1034.20L1366.11 1034.10L1366.24 1034.00L1366.37 1033.90L1366.51 1033.81L1366.65 1033.73L1366.79 1033.65L1366.94 1033.58L1367.09 1033.51L1367.24 1033.44L1367.39 1033.38L1367.51 1033.21L1367.52 1032.63L1367.52 1031.86L1367.61 1031.28L1367.82 1031.10L1368.05 1031.07L1368.29 1031.04L1368.53 1031.02L1368.76 1031.00L1369.00 1031.00L1369.24 1031.00L1369.47 1031.02L1369.71 1031.04L1369.95 1031.07L1370.18 1031.10L1370.39 1031.28L1370.48 1031.86L1370.48 1032.63L1370.49 1033.21L1370.61 1033.38L1370.76 1033.44L1370.91 1033.51L1371.06 1033.58L1371.21 1033.65L1371.35 1033.73L1371.49 1033.81L1371.63 1033.90L1371.76 1034.00L1371.89 1034.10L1372.02 1034.20L1372.23 1034.21L1372.74 1033.93L1373.40 1033.55L1373.96 1033.34L1374.21 1033.43L1374.36 1033.61L1374.50 1033.80L1374.64 1034.00L1374.77 1034.20L1374.89 1034.40L1375.00 1034.61L1375.11 1034.82L1375.21 1035.03L1375.30 1035.25L1375.39 1035.47L1375.34 1035.74L1374.88 1036.11L1374.22 1036.50L1373.72 1036.80L1373.63 1036.98L1373.65 1037.15L1373.67 1037.31L1373.69 1037.47L1373.70 1037.64Z" fill="#b4b5b7"/><circle cx="1369" cy="1037.8" r="2.1" fill="#2b2d30"/>
<g stroke="#a0a3ab" stroke-width="2.2" fill="none" stroke-linecap="round"><rect x="1923" y="1028" width="19" height="15" rx="3.5"/><path d="M1937.200 1028V1024.800A4.800 4.800 0 0 1 1946.800 1024.800V1026.500M1932.500 1033.500V1038"/></g>
<path d="M0 0H3.5L0 3.5Z" fill="#8f7a4a"/>
<path d="M1980 0H1971.5A8.5 8.5 0 0 1 1980 8.5Z" fill="#1b1816"/><path d="M1971 0A9 9 0 0 1 1980 9" stroke="#6f7376" stroke-width="1.2" fill="none"/>
</svg>
<div id="L2">
<span class="t" style="left:1076.78px;top:22px;font-size:15.5px;color:#0e4a32;letter-spacing:0.875px;font-weight:700;-webkit-text-stroke:0;">dj</span>
<span class="t" style="left:173.10px;top:634px;font-size:19px;color:#e46a6a;">Y</span>
</div>
</body></html>
